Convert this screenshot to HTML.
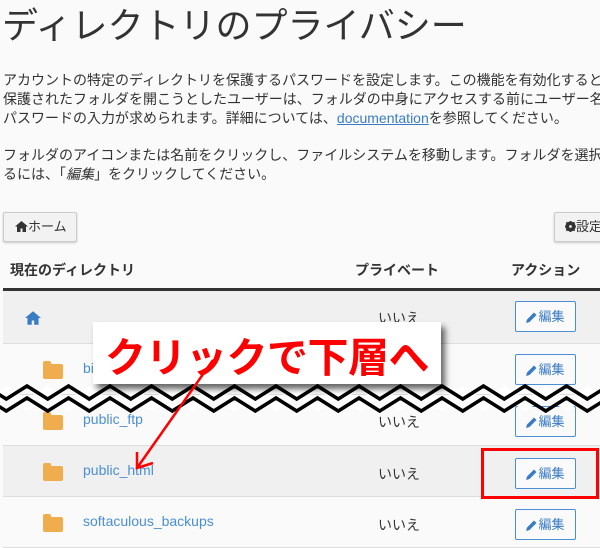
<!DOCTYPE html>
<html><head><meta charset="utf-8"><style>
*{margin:0;padding:0;box-sizing:border-box}
body{width:600px;height:535px;overflow:hidden;background:#fafafa;font-family:"Liberation Sans","Noto Sans CJK JP",sans-serif;color:#333;position:relative}
.a{position:absolute;white-space:nowrap}
h1{position:absolute;left:2px;top:-3px;font-size:36px;font-weight:400;color:#333}
.p{font-size:14px;line-height:19px;left:3px}
.btn{position:absolute;border:1px solid #ccc;background:#f2f2f2;border-radius:2px;box-shadow:0 1px 2px rgba(0,0,0,.2);font-size:13px;color:#333}
.row{position:absolute;left:3px;width:597px;border-bottom:1px solid #ddd}
.ed{position:absolute;left:515px;width:61px;height:31px;border:1px solid #4a8fd4;border-radius:2px;color:#3a7cc4;font-size:13px;line-height:29px;text-align:center;background:#fafafa}
.ed svg{vertical-align:-2px;margin-right:1px}
.fold{position:absolute;left:43px;width:20px;height:15px;background:#f0ad4e;border-radius:2px}
.fold:before{content:"";position:absolute;left:0;top:-3px;width:8px;height:4px;background:#f0ad4e;border-radius:2px 2px 0 0}
.lk{position:absolute;left:83px;color:#4a8fd4;font-size:14px}
.ie{position:absolute;left:378px;font-size:14px;color:#333}
</style></head><body>
<h1>ディレクトリのプライバシー</h1>
<div class="a p" style="top:71px">アカウントの特定のディレクトリを保護するパスワードを設定します。この機能を有効化すると<br>保護されたフォルダを開こうとしたユーザーは、フォルダの中身にアクセスする前にユーザー名<br>パスワードの入力が求められます。詳細については、<span style="color:#3a7cc4;text-decoration:underline">documentation</span>を参照してください。</div>
<div class="a p" style="top:146px">フォルダのアイコンまたは名前をクリックし、ファイルシステムを移動します。フォルダを選択<br>るには、「<i>編集</i>」をクリックしてください。</div>
<div class="btn" style="left:3px;top:212px;width:74px;height:30px;line-height:28px;padding-left:11px"><svg width="13" height="11" viewBox="0 0 13 11" style="vertical-align:-1px"><path d="M6.5 0L0 5.5h2V11h3.5V7.5h2V11H11V5.5h2z" fill="#333"/></svg>ホーム</div>
<div class="btn" style="left:554px;top:212px;width:60px;height:30px;line-height:28px;padding-left:10px"><svg width="11" height="11" viewBox="0 0 12 12" style="vertical-align:-1px"><circle cx="6" cy="6" r="4" fill="none" stroke="#333" stroke-width="3"/><path d="M5 0h2v12H5zM0 5h12v2H0z" fill="#333"/><path d="M1.5 1.5l9 9M10.5 1.5l-9 9" stroke="#333" stroke-width="2"/><circle cx="6" cy="6" r="1.5" fill="#f2f2f2"/></svg>設定</div>
<div class="a" style="left:10px;top:260px;font-size:14px;font-weight:bold">現在のディレクトリ</div>
<div class="a" style="left:355px;top:260px;font-size:14px;font-weight:bold">プライベート</div>
<div class="a" style="left:511px;top:260px;font-size:14px;font-weight:bold">アクション</div>
<div class="a" style="left:3px;top:288px;width:597px;height:3px;background:#333"></div>
<div class="row" style="top:291px;height:53px;background:#f0f0f0"></div>
<div class="row" style="top:344px;height:51px"></div>
<div class="row" style="top:395px;height:51px"></div>
<div class="row" style="top:446px;height:51px;background:#f0f0f0"></div>
<div class="row" style="top:497px;height:51px"></div>
<svg class="a" style="left:25px;top:311px" width="16" height="14" viewBox="0 0 13 11"><path d="M6.5 0L0 5.5h2V11h3.5V7.5h2V11H11V5.5h2z" fill="#3a7cc4"/></svg>
<div class="ie" style="top:308px">いいえ</div>
<div class="ed" style="top:301px"><svg width="11" height="11" viewBox="0 0 11 11"><path d="M0 11l1-3.5L8 .5l2.5 2.5-7 7z" fill="#3a7cc4"/></svg>編集</div>
<div class="fold" style="top:364px"></div><div class="lk" style="top:360px">bin</div>
<div class="ed" style="top:354px"><svg width="11" height="11" viewBox="0 0 11 11"><path d="M0 11l1-3.5L8 .5l2.5 2.5-7 7z" fill="#3a7cc4"/></svg>編集</div>
<div class="fold" style="top:415px"></div><div class="lk" style="top:411px">public_ftp</div><div class="ie" style="top:412px">いいえ</div>
<div class="ed" style="top:406px"><svg width="11" height="11" viewBox="0 0 11 11"><path d="M0 11l1-3.5L8 .5l2.5 2.5-7 7z" fill="#3a7cc4"/></svg>編集</div>
<div class="fold" style="top:466px"></div><div class="lk" style="top:462px">public_html</div><div class="ie" style="top:464px">いいえ</div>
<div class="ed" style="top:458px"><svg width="11" height="11" viewBox="0 0 11 11"><path d="M0 11l1-3.5L8 .5l2.5 2.5-7 7z" fill="#3a7cc4"/></svg>編集</div>
<div class="fold" style="top:517px"></div><div class="lk" style="top:513px">softaculous_backups</div><div class="ie" style="top:515px">いいえ</div>
<div class="ed" style="top:509px"><svg width="11" height="11" viewBox="0 0 11 11"><path d="M0 11l1-3.5L8 .5l2.5 2.5-7 7z" fill="#3a7cc4"/></svg>編集</div>
<svg class="a" style="left:0;top:375px" width="600" height="45">
<polygon fill="#fff" points="-14.5,24 6.25,11 27,24 47.75,11 68.5,24 89.25,11 110,24 130.75,11 151.5,24 172.25,11 193,24 213.75,11 234.5,24 255.25,11 276,24 296.75,11 317.5,24 338.25,11 359,24 379.75,11 400.5,24 421.25,11 442,24 462.75,11 483.5,24 504.25,11 525,24 545.75,11 566.5,24 587.25,11 608,24 608,36 587.25,23 566.5,36 545.75,23 525,36 504.25,23 483.5,36 462.75,23 442,36 421.25,23 400.5,36 379.75,23 359,36 338.25,23 317.5,36 296.75,23 276,36 255.25,23 234.5,36 213.75,23 193,36 172.25,23 151.5,36 130.75,23 110,36 89.25,23 68.5,36 47.75,23 27,36 6.25,23 -14.5,36"/>
<polyline fill="none" stroke="#000" stroke-width="3.5" points="-14.5,11 6.25,24 27,11 47.75,24 68.5,11 89.25,24 110,11 130.75,24 151.5,11 172.25,24 193,11 213.75,24 234.5,11 255.25,24 276,11 296.75,24 317.5,11 338.25,24 359,11 379.75,24 400.5,11 421.25,24 442,11 462.75,24 483.5,11 504.25,24 525,11 545.75,24 566.5,11 587.25,24 608,11"/>
<polyline fill="none" stroke="#000" stroke-width="3.5" points="-14.5,23 6.25,36 27,23 47.75,36 68.5,23 89.25,36 110,23 130.75,36 151.5,23 172.25,36 193,23 213.75,36 234.5,23 255.25,36 276,23 296.75,36 317.5,23 338.25,36 359,23 379.75,36 400.5,23 421.25,36 442,23 462.75,36 483.5,23 504.25,36 525,23 545.75,36 566.5,23 587.25,36 608,23"/>
</svg>
<div class="a" style="left:93px;top:322px;width:348px;height:62px;background:#fff;box-shadow:4px 5px 6px rgba(0,0,0,.6)"></div>
<div class="a" style="left:105px;top:324px;font-size:41px;font-weight:bold;color:#f00;letter-spacing:-0.5px">クリックで下層へ</div>
<svg class="a" style="left:0;top:0" width="600" height="535">
<line x1="213" y1="360" x2="137" y2="468" stroke="#f00" stroke-width="2.5"/>
<polyline points="137,452 137,468 153,463" fill="none" stroke="#f00" stroke-width="2.5"/>
<rect x="482.5" y="449.5" width="115" height="48" fill="none" stroke="#f00" stroke-width="3"/>
</svg>
</body></html>
